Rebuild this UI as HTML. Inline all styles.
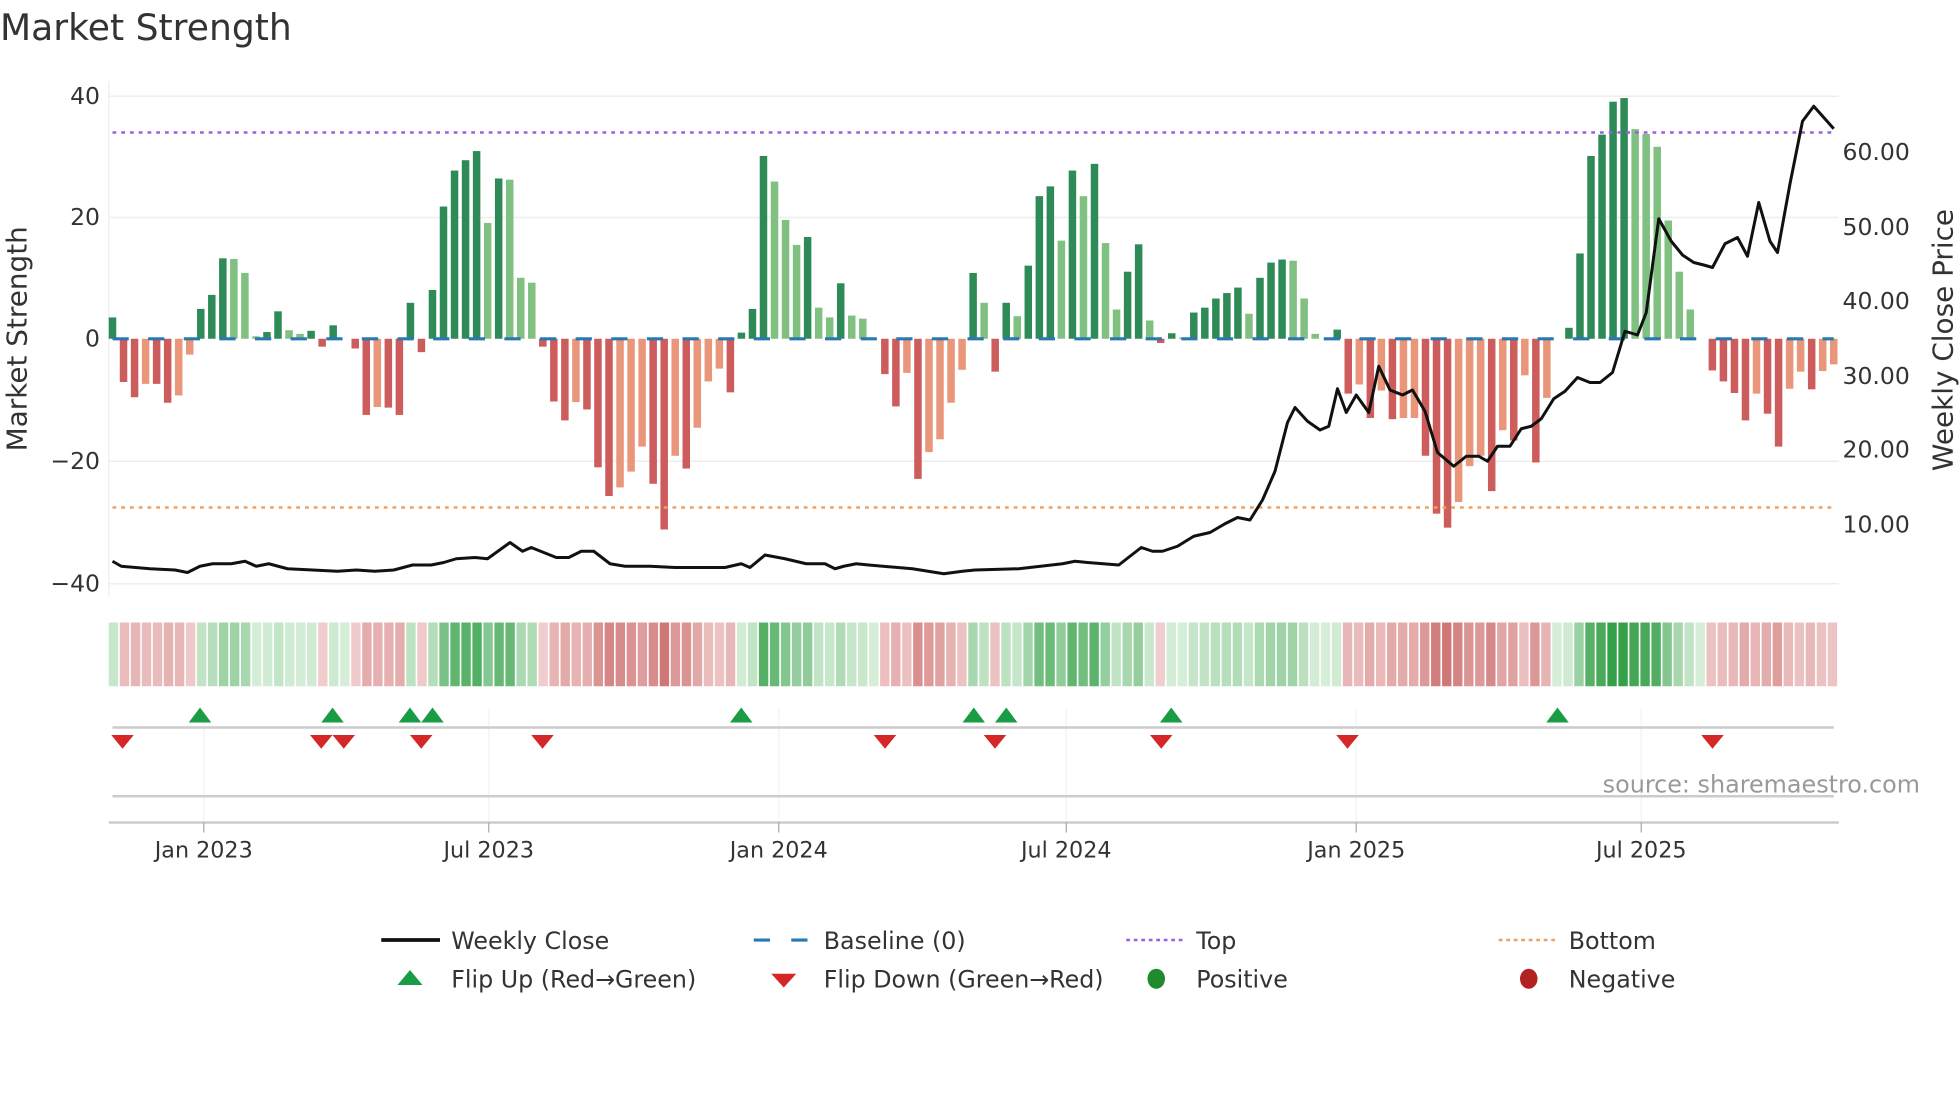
<!DOCTYPE html>
<html><head><meta charset="utf-8"><style>
html,body{margin:0;padding:0;background:#fff;}
svg{display:block;font-family:"DejaVu Sans","Liberation Sans",sans-serif;}
</style></head><body>
<svg id="s" width="1960" height="1102" viewBox="0 0 1568 881.6" xmlns="http://www.w3.org/2000/svg">
<rect width="1568" height="882" fill="#fff"/>
<text x="0" y="32" font-size="28.9" fill="#333">Market Strength</text>
<g stroke="#eeeeee" stroke-width="1.2">
<line x1="87" y1="77" x2="1471" y2="77"/><line x1="87" y1="174" x2="1471" y2="174"/>
<line x1="87" y1="369" x2="1471" y2="369"/><line x1="87" y1="467" x2="1471" y2="467"/>
</g>
<line x1="87" y1="65" x2="87" y2="478" stroke="#eee" stroke-width="1"/>
<g font-size="18.8" fill="#333" text-anchor="end">
<text x="80" y="83">40</text><text x="80" y="180">20</text><text x="80" y="277">0</text>
<text x="80" y="375">−20</text><text x="80" y="473">−40</text>
</g>
<g font-size="18.8" fill="#333">
<text x="1474" y="128">60.00</text><text x="1474" y="188">50.00</text><text x="1474" y="247">40.00</text>
<text x="1474" y="307">30.00</text><text x="1474" y="366">20.00</text><text x="1474" y="426">10.00</text>
</g>
<text transform="translate(21,271) rotate(-90)" text-anchor="middle" font-size="22.3" fill="#333">Market Strength</text>
<text transform="translate(1562,272) rotate(-90)" text-anchor="middle" font-size="22.3" fill="#333">Weekly Close Price</text>
<g id="bars"></g>
<line x1="90" y1="271" x2="1467" y2="271" stroke="#2a78b0" stroke-width="2.5" stroke-dasharray="13,15.5"/>
<line x1="90" y1="106" x2="1467" y2="106" stroke="#9b5fe0" stroke-width="2" stroke-dasharray="3,4"/>
<line x1="90" y1="406" x2="1467" y2="406" stroke="#f0a060" stroke-width="2" stroke-dasharray="3,4"/>
<polyline id="price" fill="none" stroke="#111" stroke-width="2.4" stroke-linejoin="round" points="90,449 97,453 120,455 140,456 150,458 160,453 170,451 185,451 196,449 205,453 215,451 230,455 250,456 270,457 285,456 300,457 315,456 330,452 345,452 355,450 365,447 380,446 390,447 408,434 418,441 425,438 445,446 455,446 465,441 475,441 488,451 500,453 520,453 540,454 555,454 580,454 593,451 600,454 612,444 628,447 645,451 660,451 668,455 675,453 685,451 695,452 730,455 755,459 770,457 780,456 815,455 850,451 860,449 870,450 895,452 913,438 922,441 930,441 942,437 955,429 968,426 980,419 990,414 1000,416 1010,400 1020,377 1030,338 1036,326 1046,337 1056,344 1063,341 1070,311 1077,330 1085,316 1095,330 1103,293 1112,312 1122,316 1130,312 1140,329 1150,362 1163,373 1173,365 1183,365 1190,369 1198,357 1208,357 1217,343 1225,341 1233,335 1243,319 1252,313 1262,302 1272,306 1280,306 1290,298 1300,265 1310,268 1317,250 1327,175 1337,193 1346,204 1355,210 1363,212 1370,214 1380,195 1390,190 1398,205 1407,162 1416,193 1422,202 1432,147 1442,97 1451,85 1467,103"/>
<g id="heat"></g>
<g stroke="#f2f2f2" stroke-width="1">
<line x1="163" y1="567" x2="163" y2="658"/><line x1="391" y1="567" x2="391" y2="658"/><line x1="623" y1="567" x2="623" y2="658"/>
<line x1="853" y1="567" x2="853" y2="658"/><line x1="1085" y1="567" x2="1085" y2="658"/><line x1="1313" y1="567" x2="1313" y2="658"/>
</g>
<line x1="90" y1="582" x2="1467" y2="582" stroke="#cccccc" stroke-width="2"/>
<line x1="90" y1="637" x2="1467" y2="637" stroke="#cccccc" stroke-width="2"/>
<line x1="87" y1="658" x2="1471" y2="658" stroke="#cccccc" stroke-width="2"/>
<g stroke="#aaa" stroke-width="1">
<line x1="163" y1="658" x2="163" y2="666"/><line x1="391" y1="658" x2="391" y2="666"/><line x1="623" y1="658" x2="623" y2="666"/>
<line x1="853" y1="658" x2="853" y2="666"/><line x1="1085" y1="658" x2="1085" y2="666"/><line x1="1313" y1="658" x2="1313" y2="666"/>
</g>
<g font-size="17.8" fill="#333" text-anchor="middle">
<text x="163" y="686">Jan 2023</text><text x="391" y="686">Jul 2023</text><text x="623" y="686">Jan 2024</text>
<text x="853" y="686">Jul 2024</text><text x="1085" y="686">Jan 2025</text><text x="1313" y="686">Jul 2025</text>
</g>
<g id="flips"></g>
<text x="1536" y="634" text-anchor="end" font-size="19.1" fill="#999">source: sharemaestro.com</text>
<g font-size="19" fill="#333">
<line x1="305" y1="752" x2="352" y2="752" stroke="#111" stroke-width="3"/>
<text x="361" y="759">Weekly Close</text>
<line x1="603" y1="752" x2="646" y2="752" stroke="#2a78b0" stroke-width="2.5" stroke-dasharray="13,17"/>
<text x="659" y="759">Baseline (0)</text>
<line x1="901" y1="752" x2="946" y2="752" stroke="#9b5fe0" stroke-width="2" stroke-dasharray="3,3"/>
<text x="957" y="759">Top</text>
<line x1="1199" y1="752" x2="1244" y2="752" stroke="#f0a060" stroke-width="2" stroke-dasharray="3,3"/>
<text x="1255" y="759">Bottom</text>
<polygon points="328,776 338,788 318,788" fill="#1a9c45"/>
<text x="361" y="790">Flip Up (Red→Green)</text>
<polygon points="617,779 637,779 627,790" fill="#d62728"/>
<text x="659" y="790">Flip Down (Green→Red)</text>
<ellipse cx="925" cy="783" rx="7" ry="8" fill="#1f8b2e"/>
<text x="957" y="790">Positive</text>
<ellipse cx="1223" cy="783" rx="7" ry="8" fill="#b22222"/>
<text x="1255" y="790">Negative</text>
</g>
</svg>
<script>
var d="D3.5 R-7.1 R-9.6 O-7.4 R-7.4 R-10.5 O-9.3 O-2.6 D4.9 D7.2 D13.2 L13.1 L10.8 L0.4 D1.1 D4.5 L1.4 L0.8 D1.3 R-1.3 D2.2 L0 R-1.6 R-12.5 O-11.2 R-11.3 R-12.5 D5.9 R-2.2 D8 D21.7 D27.6 D29.3 D30.8 L19 D26.3 L26.1 L10 L9.2 R-1.3 R-10.3 R-13.4 O-10.4 R-11.6 R-21.1 R-25.8 O-24.4 O-21.8 O-17.7 R-23.8 R-31.3 O-19.2 R-21.3 O-14.6 O-7 O-4.9 R-8.8 D1 D4.9 D30 L25.8 L19.5 L15.4 D16.7 L5.1 L3.5 D9.1 L3.8 L3.3 L0 R-5.8 R-11.1 O-5.6 R-23 O-18.6 O-16.5 O-10.5 O-5.1 D10.8 L5.9 R-5.4 D5.9 L3.7 D12 D23.4 D25 L16.1 D27.6 L23.4 D28.7 L15.7 L4.8 D11 D15.5 L3 R-0.7 D0.9 L0.2 D4.3 D5.1 D6.6 D7.5 D8.4 L4.1 D10 D12.5 D13 L12.8 L6.6 L0.8 L0 D1.5 R-9 O-7.5 R-13 O-8.5 R-13.2 O-13 O-13 R-19.2 R-28.7 R-31 O-26.8 O-20.9 O-19.2 R-25 O-15 R-16.7 O-6 R-20.3 O-9.7 L0 D1.8 D14 D30 D33.5 D38.9 D39.5 L34.4 L33.6 L31.5 L19.4 L11 L4.8 L0 R-5.2 R-7 R-8.9 R-13.4 O-9 R-12.3 R-17.7 O-8.2 O-5.4 R-8.3 O-5.3 O-4.2".split(" ");
var col={D:"#2e8b57",L:"#80c080",R:"#cd5c5c",O:"#e9967a"};
var NS="http://www.w3.org/2000/svg";
function el(p,n,a){var e=document.createElementNS(NS,n);for(var k in a)e.setAttribute(k,a[k]);p.appendChild(e);return e;}
var bars=document.getElementById("bars"),heat=document.getElementById("heat"),fl=document.getElementById("flips");
var step=1377/156, cw=1384/157;
function mix(a,b,t){var r=[];for(var i=0;i<3;i++)r.push(Math.round(a[i]+(b[i]-a[i])*t));return "rgb("+r.join(",")+")";}
for(var i=0;i<d.length;i++){
 var t=d[i][0],v=parseFloat(d[i].slice(1)),x=90+i*step;
 var h=Math.abs(v)*4.875;
 if(h>0.3)el(bars,"rect",{x:x-3,y:v>0?271-h:271,width:6,height:h,fill:col[t]});
 var k=Math.min(1,Math.abs(v)/38);
 var c=v>=0?mix([214,238,216],[52,160,72],k):mix([242,208,208],[200,100,100],k);
 el(heat,"rect",{x:87+i*cw,y:498,width:cw-1.3,height:51,fill:c});
}
[160,266,328,346,593,779,805,937,1246].forEach(function(x){el(fl,"polygon",{points:(x)+",566 "+(x+9)+",578 "+(x-9)+",578",fill:"#1a9c45"});});
[98,257,275,337,434,708,796,929,1078,1370].forEach(function(x){el(fl,"polygon",{points:(x-9)+",588 "+(x+9)+",588 "+x+",599",fill:"#d62728"});});
</script>
</body></html>
